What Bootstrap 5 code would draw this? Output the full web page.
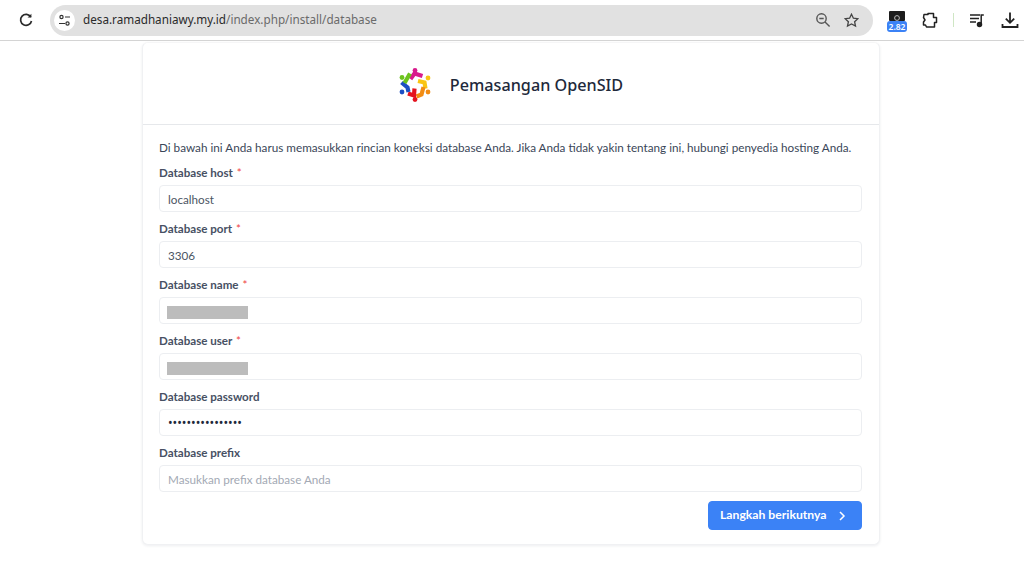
<!DOCTYPE html>
<html lang="id">
<head>
<meta charset="utf-8">
<title>Pemasangan OpenSID</title>
<link href="https://cdn.jsdelivr.net/npm/bootstrap@5.3.0/dist/css/bootstrap.min.css" rel="stylesheet">
<style>
html,body{height:561px;overflow:hidden;background:#fff;font-family:"Noto Sans",sans-serif}
.chrome-bar{height:41px;border-bottom:1px solid #d4d4d4;background:#fff;padding-left:17px}
.omni{flex:0 0 823px;height:31px;margin-left:15px;background:#e1e1e1;border-radius:16px;padding:0 14px 0 4px;font-size:11.7px;color:#6a6a6a}
.omni b{font-weight:400;color:#2a2a2a}
.tune{width:21px;height:21px;background:#fff;border-radius:50%;margin-right:8px}
.tool-gap{margin-left:13px}
.tools{margin-left:14px;gap:14px}
.ext{width:20px;height:22px;position:relative}
.ext-top{display:block;margin:2px auto 0}
.ext-tag{position:absolute;left:0;top:12px;width:20px;height:11px;background:#3b82f6;color:#fff;border-radius:3px;font-size:8.5px;line-height:11px;text-align:center;font-weight:600}
.sep{width:1px;height:14px;background:#cfe6c4}
.dl{margin-left:1px}
.setup-card{width:738px;height:503px;margin:1px 0 0 142px;border:1px solid #f0f1f3;border-top-color:#f6f6f7;border-radius:6px;box-shadow:0 1px 3px rgba(30,41,59,.08);background:#fff;color:#334155;font-family:Lato,"Noto Sans",sans-serif}
.setup-head{height:82px;border-bottom:1px solid #e6e8eb;gap:19px;padding-top:3px}
.setup-head h1{font-weight:500;margin:2px 0 0;color:#1e293b;font-family:"Noto Sans",sans-serif;font-size:16.2px}
.setup-body{padding:14px 17px 0 16px}
.intro{font-size:11.72px;line-height:16px;margin:0 0 10px;color:#3a4658;white-space:nowrap}
.fld{height:56px}
.fld label{display:block;font-size:11.6px;font-weight:700;line-height:16px;height:20px;margin:0;color:#475063}
.fld label i{font-style:normal;font-weight:400;color:#ef4444;margin-left:1px}
.fld .form-control{height:27px;padding:0 8px;font-size:11.7px;border:1px solid #eceef1;border-radius:4px;color:#4b5563;box-shadow:none}
.fld .form-control::placeholder{color:#a3a9b4;opacity:1}
.fld .pw{color:#1e293b;font-family:"Noto Sans",sans-serif;font-size:12.3px}
.masked{position:relative}
.masked .blot{position:absolute;left:8px;top:9px;width:81px;height:13px;background:#bcbcbc}
.go{width:154px;height:29px;background:#3b82f6;border:1px solid #3b82f6;border-radius:4px;color:#fff;font-size:12.2px;font-weight:700;padding:0 14px 0 11px}
.go:hover{background:#3b82f6;color:#fff}
.lg path{fill:none;stroke-width:4.2;stroke-linejoin:miter}
</style>
</head>
<body>
<div class="chrome-bar d-flex align-items-center">
<svg width="18" height="18" viewBox="0 0 18 18" fill="none" stroke="#2b2b2b" stroke-width="1.7"><path d="M13.8 6A5.5 5.5 0 1 0 14.5 10"/><path d="M14.4 2.8V6.6H10.6z" fill="#2b2b2b" stroke="none"/></svg>
<div class="omni d-flex align-items-center">
<span class="tune d-flex align-items-center justify-content-center">
<svg width="13" height="13" viewBox="0 0 13 13" fill="none" stroke="#333" stroke-width="1.2"><circle cx="3.5" cy="3" r="1.6"/><path d="M7 3h5M1 9.5h6"/><circle cx="9.5" cy="9.5" r="1.6"/></svg></span>
<span class="flex-grow-1"><b>desa.ramadhaniawy.my.id</b>/index.php/install/database</span>
<svg width="16" height="16" viewBox="0 0 16 16" fill="none" stroke="#555" stroke-width="1.4"><circle cx="6.5" cy="6.5" r="4.7"/><path d="M10 10l4.6 4.6M4.3 6.5h4.4"/></svg>
<svg class="tool-gap" width="15" height="15" viewBox="0 0 15 15" fill="none" stroke="#444" stroke-width="1.3"><path d="M7.5 1.2l1.9 4 4.4.5-3.2 3 .9 4.4-4-2.2-4 2.2.9-4.4-3.2-3 4.4-.5z"/></svg>
</div>
<div class="d-flex align-items-center tools">
<div class="ext"><svg class="ext-top" width="16" height="10" viewBox="0 0 16 10"><rect width="16" height="10" rx="1" fill="#1c1c1c"/><circle cx="8" cy="7" r="2.4" fill="none" stroke="#bbb"/></svg><span class="ext-tag">2.82</span></div>
<svg width="18" height="18" viewBox="0 0 18 18" fill="none" stroke="#222" stroke-width="1.5" stroke-linejoin="round"><path d="M3 3.5H7V2.5H12.5V6.5H15.5V11.5H13.5V16H5.5L4.5 14H2.5V11L4 9 2.5 6.5z"/></svg>
<span class="sep"></span>
<svg width="18" height="16" viewBox="-2 0 18 16" fill="none" stroke="#222" stroke-width="1.5"><path d="M0 3h10M0 6.5h9M0 10h6"/><circle cx="9.5" cy="12.5" r="2" fill="#222"/><path d="M11.2 12.5V3h2.6"/></svg>
<svg class="dl" width="18" height="18" viewBox="0 0 18 18" fill="none" stroke="#222" stroke-width="1.8"><path d="M9 1.5v10M4.8 7.6L9 11.8l4.2-4.2M1.5 13v3h15v-3"/></svg>
</div>
</div>

<div class="setup-card">
<div class="setup-head d-flex align-items-center justify-content-center">
<svg class="lg" width="32" height="34" viewBox="0 0 32 34">
<circle cx="16" cy="2.5" r="2.4" fill="#d81b8c"/><path d="M11.5 11L15.5 5.5 23.5 8" stroke="#d81b8c"/>
<circle cx="29" cy="10" r="2.4" fill="#f9c513"/><path d="M19 13L25.5 14.5 26.5 20.5" stroke="#f9c513"/>
<circle cx="29" cy="24" r="2.4" fill="#f28c13"/><path d="M17.5 28.5L22.5 26.5 24.5 19" stroke="#f28c13"/>
<circle cx="16" cy="31.5" r="2.4" fill="#e4131f"/><path d="M9 25.5L15 27.5 15.5 20.5" stroke="#e4131f"/>
<circle cx="3" cy="24" r="2.4" fill="#1c4fc4"/><path d="M2.5 14.5L8.5 19.5 9.5 24" stroke="#1c4fc4"/>
<circle cx="3" cy="9.5" r="2.4" fill="#6cc31e"/><path d="M5.5 15L11 5.5" stroke="#6cc31e"/>
</svg>
<h1>Pemasangan OpenSID</h1>
</div>
<div class="setup-body">
<p class="intro">Di bawah ini Anda harus memasukkan rincian koneksi database Anda. Jika Anda tidak yakin tentang ini, hubungi penyedia hosting Anda.</p>
<div class="fld"><label for="h">Database host <i>*</i></label><input id="h" class="form-control" value="localhost"></div>
<div class="fld"><label for="p">Database port <i>*</i></label><input id="p" class="form-control" value="3306"></div>
<div class="fld"><label for="n">Database name <i>*</i></label><div class="masked"><input id="n" class="form-control"><span class="blot"></span></div></div>
<div class="fld"><label for="u">Database user <i>*</i></label><div class="masked"><input id="u" class="form-control"><span class="blot"></span></div></div>
<div class="fld"><label for="w">Database password</label><input id="w" type="password" class="form-control pw" value="1234567890123456"></div>
<div class="fld"><label for="x">Database prefix</label><input id="x" class="form-control" placeholder="Masukkan prefix database Anda"></div>
<div class="d-flex justify-content-end">
<button type="button" class="btn go d-flex align-items-center justify-content-between">Langkah berikutnya
<svg width="10" height="10" viewBox="0 0 10 10" fill="none" stroke="#fff" stroke-width="1.5"><path d="M3 1l4 4-4 4"/></svg></button>
</div>
</div>
</div>
<script src="https://cdn.jsdelivr.net/npm/bootstrap@5.3.0/dist/js/bootstrap.bundle.min.js"></script>
</body>
</html>
